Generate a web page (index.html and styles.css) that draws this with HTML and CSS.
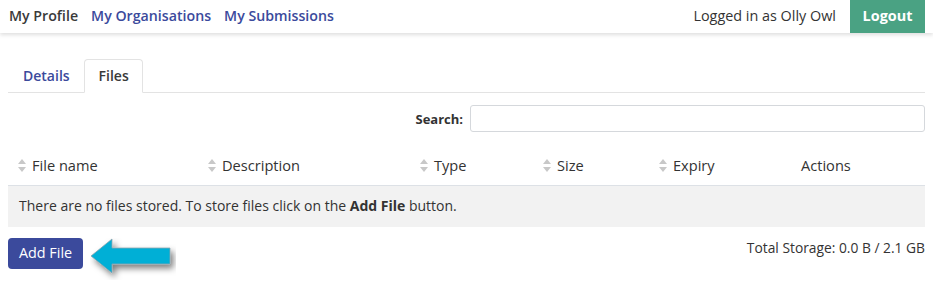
FILE: index.html
```html
<!DOCTYPE html>
<html>
<head>
<meta charset="utf-8">
<link rel="stylesheet" href="styles.css">
</head>
<body>
<header class="topbar">
  <nav class="mainnav">
    <a class="nav-link current">My Profile</a>
    <a class="nav-link">My Organisations</a>
    <a class="nav-link">My Submissions</a>
  </nav>
  <div class="userbox">
    <span class="logged">Logged in as Olly Owl</span>
    <a class="logout">Logout</a>
  </div>
</header>
<main class="content">
  <ul class="tabs">
    <li class="tab">Details</li>
    <li class="tab active">Files</li>
  </ul>
  <div class="search-row">
    <label class="search-label">Search:</label>
    <input class="search-input" type="text">
  </div>
  <table class="files">
    <thead>
      <tr>
        <th class="c-name"><svg class="sort" width="8" height="13" viewBox="0 0 8 13"><path d="M4 0 L8 5 L0 5 Z M0 8 L8 8 L4 13 Z" fill="#c8c8c8"/></svg>File name</th>
        <th class="c-desc"><svg class="sort" width="8" height="13" viewBox="0 0 8 13"><path d="M4 0 L8 5 L0 5 Z M0 8 L8 8 L4 13 Z" fill="#c8c8c8"/></svg>Description</th>
        <th class="c-type"><svg class="sort" width="8" height="13" viewBox="0 0 8 13"><path d="M4 0 L8 5 L0 5 Z M0 8 L8 8 L4 13 Z" fill="#c8c8c8"/></svg>Type</th>
        <th class="c-size"><svg class="sort" width="8" height="13" viewBox="0 0 8 13"><path d="M4 0 L8 5 L0 5 Z M0 8 L8 8 L4 13 Z" fill="#c8c8c8"/></svg>Size</th>
        <th class="c-exp"><svg class="sort" width="8" height="13" viewBox="0 0 8 13"><path d="M4 0 L8 5 L0 5 Z M0 8 L8 8 L4 13 Z" fill="#c8c8c8"/></svg>Expiry</th>
        <th class="c-act">Actions</th>
      </tr>
    </thead>
    <tbody>
      <tr class="empty"><td colspan="6">There are no files stored. To store files click on the <b>Add File</b> button.</td></tr>
    </tbody>
  </table>
  <div class="footer-row">
    <div class="add-wrap">
      <button class="add-btn">Add File</button>
      <svg class="arrow" width="86" height="42" viewBox="0 0 86 42">
        <defs>
          <filter id="sh" x="-20%" y="-30%" width="150%" height="180%">
            <feDropShadow dx="3" dy="4" stdDeviation="3" flood-color="#000" flood-opacity="0.5"/>
          </filter>
        </defs>
        <polygon points="1,18 22,1 22,10 80,10 80,26 22,26 22,35" fill="#00afd6" stroke="#8aa4ae" stroke-width="0.8" filter="url(#sh)"/>
      </svg>
    </div>
    <div class="storage">Total Storage: 0.0 B / 2.1 GB</div>
  </div>
</main>
</body>
</html>
```
FILE: styles.css
```css
* { box-sizing: border-box; }
body {
  margin: 0;
  font-family: "Open Sans", "Noto Sans", sans-serif;
  color: #333;
  background: #fff;
  font-size: 14px;
}
.topbar {
  height: 33px;
  display: flex;
  justify-content: space-between;
  align-items: stretch;
  box-shadow: 0 2px 4px rgba(0,0,0,0.13);
  padding-left: 9px;
  padding-right: 8px;
}
.mainnav { display: flex; align-items: center; gap: 13px; padding-bottom: 3px; }
.nav-link {
  font-weight: 600;
  font-size: 14.2px;
  color: #3b4a9c;
  text-decoration: none;
}
.nav-link.current { color: #3a3a3a; }
.userbox { display: flex; align-items: stretch; }
.logged { display: flex; align-items: center; font-size: 14.4px; color: #333; margin-right: 14px; padding-bottom: 3px; }
.logout {
  display: flex;
  align-items: center;
  justify-content: center;
  width: 75px;
  padding-bottom: 3px;
  background: #4aa283;
  color: #fff;
  font-weight: 700;
  font-size: 14.4px;
}
.content { padding: 0 8px; }
.tabs {
  list-style: none;
  margin: 26px 0 0;
  padding: 0;
  display: flex;
  border-bottom: 1px solid #e3e3e3;
  height: 34px;
}
.tab {
  padding: 0 13px 2px 14px;
  display: flex;
  align-items: center;
  font-weight: 600;
  color: #3b4a9c;
  font-size: 14px;
  border: 1px solid transparent;
  border-radius: 4px 4px 0 0;
  margin-bottom: -1px;
}
.tab.active {
  color: #3a3a3a;
  border-color: #e3e3e3 #e3e3e3 #fff;
  background: #fff;
}
.search-row {
  display: flex;
  justify-content: flex-end;
  align-items: center;
  margin-top: 12px;
  gap: 7px;
}
.search-label { font-weight: 700; font-size: 13px; color: #333; }
.search-input {
  width: 455px;
  height: 27px;
  border: 1px solid #d5d8dc;
  border-radius: 3px;
  margin: 0;
}
.files {
  width: 100%;
  border-collapse: collapse;
  margin-top: 12px;
}
.files th {
  text-align: left;
  font-weight: 400;
  font-size: 14.6px;
  line-height: 20px;
  color: #333;
  padding: 11px 0 10px 10px;
  border-bottom: 1px solid #dde1e6;
  white-space: nowrap;
}
.c-name { width: 190px; }
.c-desc { width: 212px; }
.c-type { width: 123px; }
.c-size { width: 116px; }
.c-exp { width: 142px; }
.sort {
  display: inline-block;
  margin-right: 6px;
  vertical-align: -1px;
}
.empty td {
  background: #f2f2f2;
  height: 41px;
  padding: 0 11px 2px;
  font-size: 14px;
  color: #333;
}
.empty b { font-weight: 700; }
.footer-row {
  display: flex;
  justify-content: space-between;
  align-items: flex-start;
  margin-top: 11px;
}
.add-wrap { display: flex; align-items: flex-start; gap: 7px; }
.add-btn {
  width: 75px;
  height: 31px;
  background: #3b4a9c;
  color: #fff;
  border: none;
  border-radius: 4px;
  font-family: inherit;
  font-size: 14.4px;
  padding: 0 0 1px;
}
.arrow { display: block; margin-top: 0; }
.storage { font-size: 13.8px; color: #333; margin-top: 0; }
```
